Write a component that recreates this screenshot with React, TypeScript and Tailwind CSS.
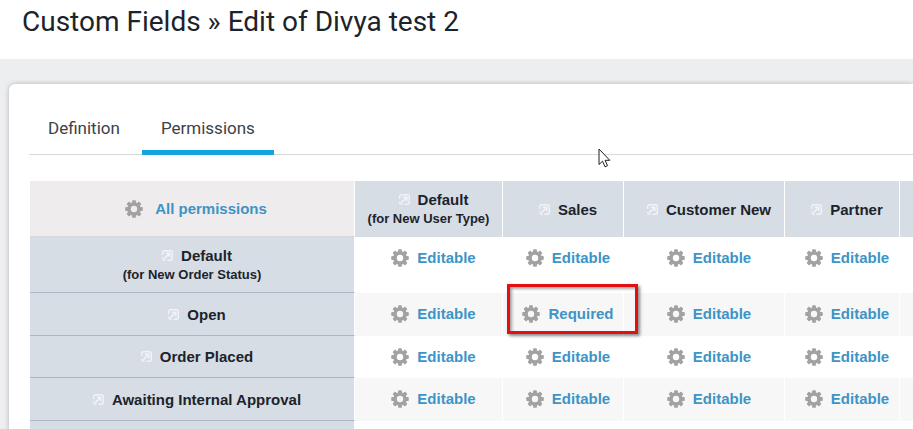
import React from 'react';

const columns = ['Sales', 'Customer New', 'Partner'];

const rows = [
  { label: 'Default', note: '(for New Order Status)', values: ['Editable', 'Editable', 'Editable', 'Editable'] },
  { label: 'Open', values: ['Editable', 'Required', 'Editable', 'Editable'] },
  { label: 'Order Placed', values: ['Editable', 'Editable', 'Editable', 'Editable'] },
  { label: 'Awaiting Internal Approval', values: ['Editable', 'Editable', 'Editable', 'Editable'] },
];

const teeth = [0, 45, 90, 135, 180, 225, 270, 315];

function GearIcon() {
  return (
    <svg width="18" height="18" viewBox="0 0 18 18" className="shrink-0" aria-hidden="true">
      <circle cx="9" cy="9" r="5" fill="none" stroke="#a2a2a2" strokeWidth="3.6" />
      {teeth.map((angle) => (
        <rect key={angle} x="7.1" y="0.2" width="3.8" height="3.4" rx="0.9" fill="#a2a2a2" transform={`rotate(${angle} 9 9)`} />
      ))}
    </svg>
  );
}

function OpenIcon() {
  return (
    <svg width="11" height="11" viewBox="0 0 11 11" className="shrink-0" fill="none" stroke="#f1f4f7" aria-hidden="true">
      <path d="M.7 5V2.7Q.7.7 2.7.7H8.3Q10.3.7 10.3 2.7V8.3Q10.3 10.3 8.3 10.3H5.5" strokeWidth="1.4" />
      <path d="M.7 7.6V8.3Q.7 10.3 2.7 10.3H3.6" strokeWidth="1.2" />
      <path d="M3.8 3.2H7.8V7.2M7.6 3.4L2.4 8.6" strokeWidth="1.6" />
    </svg>
  );
}

function Heading({ label, note }: { label: string; note?: string }) {
  return (
    <>
      <span className="flex items-center justify-center gap-2 pl-[10px]">
        <OpenIcon />
        {label}
      </span>
      {note && <span className="block text-[13px] leading-[19px]">{note}</span>}
    </>
  );
}

function PermissionLink({ value }: { value: string }) {
  return (
    <a href="#" className="flex items-center justify-center gap-2 pl-[10px] font-bold text-[#3d94c6]">
      <GearIcon />
      {value}
    </a>
  );
}

function Cursor() {
  return (
    <svg width="13" height="20" viewBox="0 0 13 20" className="absolute left-[598px] top-[148px]" aria-hidden="true">
      <path d="M1 1V16.5L4.5 13.2L7 18.8L9.5 17.7L7.1 12.3H11.8Z" fill="#fff" stroke="#1d1d28" strokeWidth="1" />
    </svg>
  );
}

export default function App() {
  return (
    <div className="relative flex h-screen flex-col overflow-hidden bg-[#edeef0] font-['Liberation_Sans',Arial,sans-serif] text-[#1d232a]">
      <header className="shrink-0 bg-white px-[22px] pt-1 pb-[19px]">
        <h1 className="whitespace-nowrap font-[Roboto,sans-serif] text-[28px] leading-9 font-normal">Custom Fields » Edit of Divya test 2</h1>
      </header>

      <main className="mt-[25px] ml-[9px] grow rounded-tl-md bg-white pt-[22px] pl-5 shadow-[0_0_5px_rgba(0,0,0,0.25)]">
        <nav className="flex gap-[3px] border-b border-[#d9d9d9] font-[Roboto,sans-serif] text-[17px] leading-[22px] text-[#3c4248]">
          <a href="#" className="-mb-px border-b-5 border-transparent px-[19px] pt-[11px] pb-[11px]">Definition</a>
          <a href="#" aria-current="page" className="-mb-px border-b-5 border-[#14a5e0] px-[19px] pt-[11px] pb-[11px]">Permissions</a>
        </nav>

        <div className="mt-[26px] pl-px">
          <table className="w-full table-fixed border-separate border-spacing-0 text-center text-[15px] leading-[19px]">
            <colgroup>
              <col className="w-[325px]" />
              <col className="w-[148px]" />
              <col className="w-[121px]" />
              <col className="w-[161px]" />
              <col className="w-[115px]" />
              <col />
            </colgroup>
            <thead>
              <tr className="h-14 bg-[#d6dde5]">
                <th className="border-r border-b border-r-white border-b-[#d6d8dd] bg-[#eeecec]">
                  <a href="#" className="flex items-center justify-center gap-3 pl-2 text-[#3d94c6]">
                    <GearIcon />
                    All permissions
                  </a>
                </th>
                <th className="border-r border-white">
                  <Heading label="Default" note="(for New User Type)" />
                </th>
                {columns.map((name) => (
                  <th key={name} className="border-r border-white">
                    <Heading label={name} />
                  </th>
                ))}
                <th />
              </tr>
            </thead>
            <tbody>
              {rows.map((row) => (
                <tr key={row.label} className={row.note ? 'h-14' : 'odd:h-[42px] even:h-[43px] odd:bg-white even:bg-[#f7f7f7]'}>
                  <th className="border-r border-b border-r-white border-b-[#aeb6c2] bg-[#d6dde5]">
                    <Heading label={row.label} note={row.note} />
                  </th>
                  {row.values.map((value, i) => (
                    <td key={i} className="relative border-r border-white pt-[11px] align-top">
                      <PermissionLink value={value} />
                      {value === 'Required' && (
                        <span className="pointer-events-none absolute -top-[9px] left-1 z-10 h-[50px] w-[131px] border-3 border-[#e40f12] shadow-[2px_2px_3px_rgba(0,0,0,0.45),inset_2px_2px_3px_rgba(0,0,0,0.35)]" />
                      )}
                    </td>
                  ))}
                  <td />
                </tr>
              ))}
              <tr className="h-[42px]">
                <th className="border-r border-white bg-[#d6dde5]" />
                <td colSpan={5} />
              </tr>
            </tbody>
          </table>
        </div>
      </main>

      <Cursor />
    </div>
  );
}
